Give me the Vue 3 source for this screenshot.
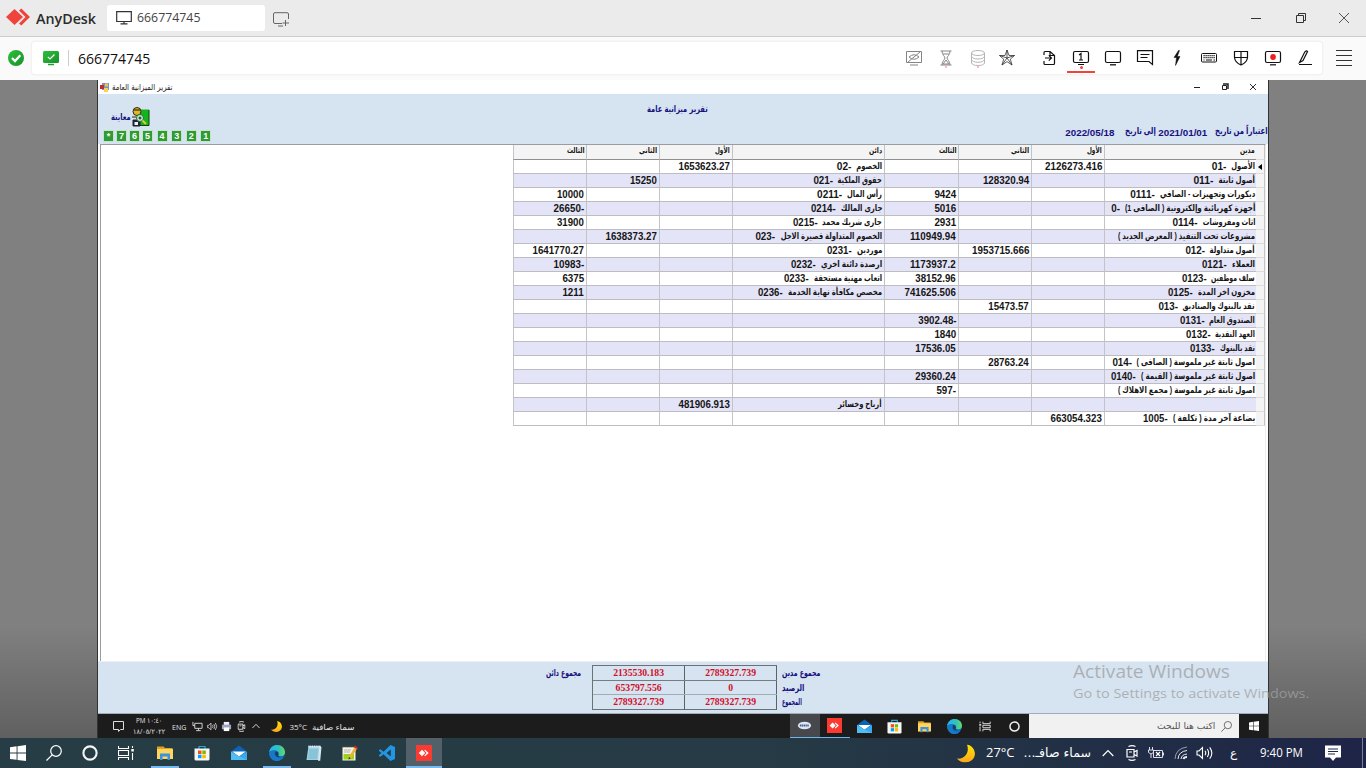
<script setup>
// Squeezes or stretches a line of text to a set width, in the layout too.
const vFit = {
  mounted(el, { value }) {
    const natural = el.offsetWidth
    if (!natural || !value) return
    const style = getComputedStyle(el)
    const rtl = style.direction === 'rtl'
    const own = parseFloat(rtl ? style.marginLeft : style.marginRight) || 0
    el.style.transformOrigin = rtl ? 'right center' : 'left center'
    el.style.transform = `scaleX(${value / natural})`
    el.style[rtl ? 'marginLeft' : 'marginRight'] = `${own + value - natural}px`
    if (rtl && own) el.style.marginLeft = `${own + value - natural}px`
  }
}

const numWidth = (s) => [...s].reduce((w, c) => w + (c === '.' ? 2.9 : c === '-' ? 3.4 : 5.4), 0)

const headers = ['مدين', 'الأول', 'الثاني', 'الثالث', 'دائن', 'الأول', 'الثاني', 'الثالث']
const headWidths = [15, 15, 18, 18, 13, 15, 18, 18]

// debit name, width, first, second, third, credit name, width, first, second, third
const source = [
  ['الأصول  -01', 43, '2126273.416', '', '', 'الخصوم  -02', 45, '1653623.27', '', ''],
  ['أصول ثابتة  -011', 61, '', '128320.94', '', 'حقوق الملكية  -021', 69, '', '15250', ''],
  ['ديكورات وتجهيزات  -  الصافي  -0111', 125, '', '', '9424', 'رأس المال  -0211', 65, '', '', '10000'],
  ['أجهزة كهربائية وإلكترونية ( الصافى 1)  -0', 144, '', '', '5016', 'جارى المالك  -0214', 71, '', '', '-26650'],
  ['اثاث ومفروشات  -0114', 83, '', '', '2931', 'جارى شريك محمد  -0215', 90, '', '', '31900'],
  ['مشروعات تحت التنفيذ ( المعرض الجديد )', 137, '', '', '110949.94', 'الخصوم المتداولة قصيرة الاجل  -023', 126, '', '1638373.27', ''],
  ['أصول متداولة  -012', 70, '', '1953715.666', '', 'موردين  -0231', 56, '', '', '1641770.27'],
  ['العملاء  -0121', 53, '', '', '1173937.2', 'ارصدة دائنة اخري  -0232', 91, '', '', '-10983'],
  ['سلف موظفين  -0123', 74, '', '', '38152.96', 'اتعاب مهنية مستحقة  -0233', 98, '', '', '6375'],
  ['مخزون اخر المدة  -0125', 87, '', '', '741625.506', 'مخصص مكافأة نهاية الخدمة  -0236', 124, '', '', '1211'],
  ['نقد بالبنوك والصناديق  -013', 97, '', '15473.57', '', '', 0, '', '', ''],
  ['الصندوق العام  -0131', 76, '', '', '-3902.48', '', 0, '', '', ''],
  ['العهد النقدية  -0132', 70, '', '', '1840', '', 0, '', '', ''],
  ['نقد بالبنوك  -0133', 65, '', '', '17536.05', '', 0, '', '', ''],
  ['اصول ثابتة غير ملموسة ( الصافى )  -014', 143, '', '28763.24', '', '', 0, '', '', ''],
  ['اصول ثابتة غير ملموسة ( القيمة )  -0140', 144, '', '', '29360.24', '', 0, '', '', ''],
  ['اصول ثابتة غير ملموسة ( مجمع الاهلاك )', 137, '', '', '-597', '', 0, '', '', ''],
  ['', 0, '', '', '', 'أرباح وخسائر', 44, '481906.913', '', ''],
  ['بضاعة آخر مدة ( تكلفة )  -1005', 112, '663054.323', '', '', '', 0, '', '', '']
]

const GAP = 5
// A cell is a list of text pieces; an account's name and its code are separate pieces.
const label = (text, width) => {
  if (!text) return []
  const m = text.match(/^(.*?)\s+(-\d+)$/)
  if (!m) return [{ t: text, w: width, ar: true }]
  const cw = numWidth(m[2])
  return [{ t: m[1], w: width - cw - GAP, ar: true }, { t: m[2], w: cw, code: true }]
}
const num = (t) => (t ? [{ t, w: numWidth(t) }] : [])
const rows = source.map((r) => [label(r[0], r[1]), ...r.slice(2, 5).map(num), label(r[5], r[6]), ...r.slice(7).map(num)])

const totals = [['2135530.183', '2789327.739'], ['653797.556', '0'], ['2789327.739', '2789327.739']]
const badges = ['*', '7', '6', '5', '4', '3', '2', '1']
const remoteApps = ['anydesk', 'mail', 'store', 'folder', 'edge', 'rtask', 'ring']
const hostApps = ['win', 'search', 'ring', 'task', 'folder', 'store', 'mail', 'edge', 'notepad', 'notepp', 'code', 'anydesk']
</script>

<template>
  <div class="screen">
    <svg class="defs" aria-hidden="true">
      <defs>
        <linearGradient id="gMoon" x1="0" y1="0" x2="0" y2="1"><stop offset="0" stop-color="#ffe600" /><stop offset="1" stop-color="#ffa51e" /></linearGradient>
        <linearGradient id="gEdge" x1="0" y1="0" x2="1" y2="0"><stop offset="0" stop-color="#2bb5e8" /><stop offset=".6" stop-color="#2fc2bd" /><stop offset="1" stop-color="#6bdc5a" /></linearGradient>
        <linearGradient id="gGreen" x1="0" y1="0" x2="1" y2="1"><stop offset="0" stop-color="#2fbf3c" /><stop offset="1" stop-color="#16912a" /></linearGradient>
      </defs>
      <symbol id="win" viewBox="0 0 16 16"><path d="M0 2.2 6.6 1.300V7.600H0zM7.500 1.200 16 0V7.600H7.500zM0 8.500H6.600V14.800L0 13.900zM7.500 8.500H16V16L7.500 14.900z" fill="#fff" /></symbol>
      <symbol id="search" viewBox="0 0 16 16"><g fill="none" stroke="currentColor" stroke-width="1.200"><circle cx="10" cy="6" r="5.300" /><path d="M6.200 9.800.5 15.500" /></g></symbol>
      <symbol id="ring" viewBox="0 0 16 16"><circle cx="8" cy="8" r="6.600" fill="none" stroke="#f4f4f4" stroke-width="2.100" /></symbol>
      <symbol id="task" viewBox="0 0 16 16"><path d="M.5 1V3.500H10.500V1M.5 15V12.500H10.500V15M.5 5.500H10.500V10.500H.5zM14.500 1V3M14.500 8V15" fill="none" stroke="#fff" stroke-width="1.100" /><path d="M13.300 4H15.800V6.500H13.300z" fill="#fff" /></symbol>
      <symbol id="rtask" viewBox="0 0 16 16"><path d="M15 2V4.500H6V2M15 14V11.500H6V14M6 6.500H15V9.500H6zM2.500 2V4M2.500 8V14" fill="none" stroke="#ddd" stroke-width="1.200" /><path d="M1.500 5H4V7H1.500z" fill="#ddd" /></symbol>
      <symbol id="folder" viewBox="0 0 16 16"><path d="M0 1.500H6.500L8 3H15.500V14H0z" fill="#e0a21b" /><path d="M0 4H16V14H0z" fill="#ffd560" /><path d="M3 15V8.500H13V15H10.500V11.500H5.500V15z" fill="#3a94dc" /></symbol>
      <symbol id="store" viewBox="0 0 16 16"><path d="M5 4V1.500H11V4" fill="none" stroke="#27a7dd" stroke-width="1.200" /><path d="M.5 3.500H15.500V14q0 1.500-1.500 1.500H2Q.5 15.500.5 14z" fill="#f6f6f6" /><path d="M4 5.500H7.500V9H4z" fill="#f25022" /><path d="M8.300 5.500H11.800V9H8.300z" fill="#7fba00" /><path d="M4 9.700H7.500V13.200H4z" fill="#00a4ef" /><path d="M8.300 9.700H11.800V13.200H8.300z" fill="#ffb900" /></symbol>
      <symbol id="mail" viewBox="0 0 16 16"><path d="M0 6.500 8 .5 16 6.500V15H0z" fill="#0d62b5" /><path d="M1.200 6.500H14.800L8 11.500z" fill="#fff" /><path d="M0 6.500 8 11.500 16 6.500V15H0z" fill="#39a8ed" /><path d="M0 6.500V15H16L6 10.200z" fill="#50bdf5" /></symbol>
      <symbol id="edge" viewBox="0 0 16 16"><circle cx="8" cy="8" r="7.900" fill="#1469bd" /><path d="M.2 7C1 2.500 4.300 0 8.200 0 12.800 0 16 3.300 16 7.300c0 3-2.300 4-4.500 4-1.800 0-2.500-.7-2-1.500C10.500 8 9 5.500 6 5.500 3 5.500.8 7.300.2 7z" fill="url(#gEdge)" /><path d="M.2 7C2 5.300 5 4.900 6.900 5.700 5.200 6.800 5.100 9 6 10.800 7.300 13 10.800 14.300 14.500 12.300 12.800 15 10.500 16 8 16 3 16-.3 11.500.2 7z" fill="#1679ca" /><path d="M7.200 6.500C9 6.500 9.900 8.500 9.300 9.900c-.5 1.200.9 1.700 2.700 1.500C9.800 13 6.800 11.700 6.300 9.500 6 8 6.400 6.500 7.200 6.500z" fill="#1c3e5c" /></symbol>
      <symbol id="notepad" viewBox="0 0 16 16"><path d="M2.500 1H15L13.500 15H.5z" fill="#9ed1e2" /><path d="M13.200 2H15.500L14.200 15.700H12z" fill="#d7e7ec" /><path d="M2.500 1.500H14.500" stroke="#eef" stroke-width="2" stroke-dasharray="1 .8" /><path d="M3 5H12M3 7H12M2.500 9H11.500M2.500 11H11.500M2 13H11" stroke="#62aac3" stroke-width=".7" /></symbol>
      <symbol id="notepp" viewBox="0 0 16 16"><path d="M.5 2H13.500V15.500H.5z" fill="#f5f3e7" /><path d="M.5 1.500H13.500" stroke="#444" stroke-width="2" stroke-dasharray="1.200 .8" /><path d="M2 5H9M2 7H8" stroke="#999" stroke-width=".7" /><path d="M1.500 9H12V14.500H1.500z" fill="#9bd31b" /><path d="M13 1.500 15.500 3 9 13 6.500 14.500 7 11.500z" fill="#eeb23a" /><path d="M13 .8 15.800 2.400 14.800 4 12 2.400z" fill="#d62828" /><path d="M6.500 14.500 7 12 8.700 13.200z" fill="#222" /></symbol>
      <symbol id="code" viewBox="0 0 16 16"><path d="M11.500 0 16 2V14L11.500 16 4.500 9.300 1.500 11.800 0 11V10L2.500 8 0 6V5L1.500 4.200 4.500 6.700zM11.800 4.500 7.500 8 11.800 11.500z" fill="#2296e3" /></symbol>
      <symbol id="anydesk" viewBox="0 0 16 16"><path d="M0 0H16V16H0z" fill="#fb3b31" /><path d="M6 4.800 9.200 8 6 11.200 2.800 8zM9 4.800 12.700 8 9 11.200 8.300 10.500 10.600 8 8.300 5.500z" fill="#fff" /></symbol>
      <symbol id="moon" viewBox="0 0 18 18"><path d="M10 0C15.500 1 18.500 6 17.800 10.500 16.500 18.500 5 20.500 0 14 3 14.500 6 13.500 8 11.500 11 8.500 11.500 4 10 0z" fill="url(#gMoon)" /></symbol>
      <symbol id="up" viewBox="0 0 12 8"><path d="M.7 7 6 1.500 11.300 7" fill="none" stroke="#fff" stroke-width="1.200" /></symbol>
      <symbol id="sound" viewBox="0 0 18 16"><path d="M1 6V10H3L6.500 13.500V2.500L3 6zM9 5.800Q10.500 8 9 10.200M11.300 4Q14 8 11.300 12M13.700 2.300Q18 8 13.700 13.700" fill="none" stroke="#fff" stroke-width="1.100" /></symbol>
      <symbol id="cam" viewBox="0 0 12 16"><path d="M1 4.500H8V12H1zM8 7 11 5.500V11L8 9.500M2.500 1.500Q6-.1 9.500 1.500M2.500 14.500Q6 16.100 9.500 14.500" fill="none" stroke="#fff" stroke-width="1.200" /><path d="M3 6.500H6V7.500H3z" fill="#fff" /></symbol>
    </svg>

    <header class="titlebar">
      <svg class="logo" viewBox="0 0 24 18"><path d="M8.500 1 17 9 8.500 17 0 9z" fill="#ef443b" /><path d="M13 2.500 15.300.5 24 9 15.300 17.500 13 15.500 19.500 9z" fill="#ef443b" /></svg>
      <b class="brand" v-fit="60">AnyDesk</b>
      <div class="tab">
        <svg width="16" height="14" viewBox="0 0 16 14"><path d="M.7.700H15.300V10.500H.7zM8 10.500V12.500M4.500 12.800H11.500" fill="none" stroke="#333" stroke-width="1.200" /></svg>
        <span v-fit="63">666774745</span>
      </div>
      <svg class="newtab" width="17" height="16" viewBox="0 0 17 16"><path d="M9 11.500H2Q.5 11.500.5 10V2Q.5.700 2 .700H14Q15.500.700 15.500 2V7M5 14H10M12.500 8V14M9.500 11H16" fill="none" stroke="#666" /></svg>
      <div class="winbtns">
        <svg width="12" height="12"><path d="M1 6.500H11" stroke="#333" /></svg>
        <svg width="12" height="12"><path d="M1.500 3.500H8.500V10.500H1.500zM3.500 3.500V1.500H10.500V8.500H8.500" fill="none" stroke="#333" /></svg>
        <svg width="12" height="12"><path d="M1 1 11 11M11 1 1 11" stroke="#555" /></svg>
      </div>
    </header>

    <div class="addressbar">
      <svg class="ok" width="16" height="16"><circle cx="8" cy="8" r="8" fill="url(#gGreen)" /><path d="M4 8 7 11 12.300 5.200" fill="none" stroke="#fff" stroke-width="2.300" /></svg>
      <div class="field">
        <svg class="mon" width="16" height="15"><rect width="16" height="12" rx="1.500" fill="url(#gGreen)" /><path d="M4.800 5.800 7 8 11.500 3.500" fill="none" stroke="#fff" stroke-width="1.200" /><path d="M5 13.500H11" stroke="#1e9e31" stroke-width="1.500" /></svg>
        <i class="divider"></i>
        <span class="addr" v-fit="72">666774745</span>
        <div class="tools">
          <svg class="dim" viewBox="0 0 20 20"><path d="M2.500 3.500H17.500V14.500H2.500zM6 17H14M4 14 16 4M5 9Q10 4.500 15 9Q10 13.500 5 9" /></svg>
          <svg class="dim" viewBox="0 0 20 20"><path d="M4.500 3H15.500M4.500 17H15.500M6 3C6 7 9 8.500 9 10 9 11.500 6 13 6 17M14 3C14 7 11 8.500 11 10 11 11.500 14 13 14 17M7 6H13M10 12 7 16H13z" /><circle cx="10" cy="18.700" r="1.200" class="soft" /></svg>
          <svg class="dim" viewBox="0 0 20 20"><g opacity=".6"><ellipse cx="10" cy="5" rx="6.500" ry="2.500" /><path d="M3.500 5V15Q4.500 17.500 10 17.500T16.500 15V5M3.500 8.300Q4.500 11 10 11T16.500 8.300M3.500 11.500Q4.500 14.300 10 14.300T16.500 11.500" /></g><circle cx="10" cy="18.700" r="1.200" class="soft" /></svg>
          <svg class="star" viewBox="0 0 20 20"><path d="M10 2 12 7.500H17.500L13.300 11.200 15 17 10 13.600 5 17 6.700 11.200 2.500 7.500H8zM10 2V10L5 17M2.500 7.500 10 10 17.500 7.500M10 10 15 17" stroke-width=".8" /></svg>
          <svg class="gap" viewBox="0 0 20 20"><path d="M5 7V4.500Q5 3.500 6 3.500H11L15.500 7.500V15.500Q15.500 16.500 14.500 16.500H6Q5 16.500 5 15.500V13M11 3.500V7.500H15.500M6 10H12.500M9.800 7.300 12.500 10 9.800 12.700" stroke-width="1.200" /></svg>
          <div class="active"><svg viewBox="0 0 20 20"><rect x="2.500" y="3.500" width="15" height="11" rx="1.500" /><path d="M8 7 10 5.500V12M8 12H12M7 16.500H13" /></svg><i></i></div>
          <svg viewBox="0 0 20 20"><rect x="2.500" y="3.500" width="15" height="11" rx="1.500" stroke-width="1.200" /><path d="M7 16.800H13" stroke-width="1.300" /></svg>
          <svg viewBox="0 0 20 20"><path d="M2.500 2.700H17.500V16.500L14 13.500H2.500zM5.500 6.500H14.500M5.500 9.500H12.500" stroke-width="1.200" /></svg>
          <svg viewBox="0 0 20 20"><path d="M11.500 2.500 7 9.500H9.500L8.500 17.500 13 8.500H10.300L12.500 2.500z" fill="#111" stroke-width=".5" /></svg>
          <svg viewBox="0 0 20 20"><rect x="2.500" y="5.500" width="15" height="8.500" rx="1" stroke-width="1" /><path d="M4.500 7.700H16M4.500 9.700H16" stroke-dasharray="1.200 .8" /><path d="M4.500 12H5.500M7 12H13M14.500 12H16" /></svg>
          <svg viewBox="0 0 20 20"><path d="M3.500 3.500H16.500V9.500Q16 14.500 10 17Q4 14.500 3.500 9.500zM10 3.500V17M3.500 9.500H16.500" stroke-width="1.200" /></svg>
          <svg viewBox="0 0 20 20"><rect x="2.500" y="3.500" width="15" height="11" rx="1.500" /><circle cx="10" cy="9" r="2.900" class="rec" /><path d="M7 16.800H13" /></svg>
          <svg viewBox="0 0 20 20"><path d="M4.500 14.500 9.500 4.500Q11 2 12.500 3.500L8 12.500zM4 16.500H17" stroke-width="1.200" /></svg>
        </div>
      </div>
      <svg class="menu" width="16" height="18"><path d="M0 1.500H16M0 6.500H16M0 11.500H16M0 16.500H16" stroke="#333" stroke-width="1.200" /></svg>
    </div>

    <main class="remote">
      <section class="window">
        <div class="apptitle">
          <svg width="9" height="9"><path d="M2 0H9V7H2z" fill="#7195cf" /><path d="M5 .500H8V3.500H5z" fill="#f5c242" /><path d="M0 2H4V6H0z" fill="#c92a20" /><path d="M4 5H8V9H4z" fill="#f7d35b" /></svg>
          <span dir="rtl" v-fit="61">تقرير الميزانية العامة</span>
          <div class="appbtns">
            <svg width="8" height="8"><path d="M1 4.500H7" stroke="#222" /></svg>
            <svg width="8" height="8"><path d="M1.500 2.500H5.500V6.500H1.500z" fill="none" stroke="#222" /><path d="M2 1H7V6" fill="none" stroke="#222" stroke-width="1.500" /></svg>
            <svg width="8" height="8"><path d="M1 1 7 7M7 1 1 7" stroke="#333" /></svg>
          </div>
        </div>

        <div class="report">
          <div class="left">
            <div class="preview">
              <span dir="rtl" v-fit="20">معاينة</span>
              <svg width="18" height="20"><path d="M7 2.500H17V18H7z" fill="#12b51c" /><path d="M17 3V18.500H8" fill="none" stroke="#123e15" /><circle cx="5" cy="4.500" r="4" fill="#dcb62c" stroke="#332a0a" /><path d="M2 3H8" stroke="#4a3a10" stroke-width="1.300" /><path d="M0 10H4M1 13H8V19H1z" fill="#22223a" stroke="#222" /><path d="M2.500 15H6V18H2.500z" fill="#eef" /><circle cx="8" cy="11" r="3.500" fill="#c9f0d0" stroke="#1c6e32" /><path d="M6.500 11H9.500M8 9.500V12.500" stroke="#111" /><path d="M10.500 13.500 14 17" stroke="#e6c933" stroke-width="2" /></svg>
            </div>
            <div class="badges"><b v-for="b in badges" :key="b">{{ b }}</b></div>
          </div>
          <h1 dir="rtl"><span v-fit="61">تقرير ميزانية عامة</span></h1>
          <div class="dates">
            <span v-fit="49">2022/05/18</span>
            <span dir="rtl" class="d2" v-fit="31">إلى تاريخ</span>
            <span class="d3" v-fit="49">2021/01/01</span>
            <span dir="rtl" class="d4" v-fit="53">اعتباراً من تاريخ</span>
          </div>
        </div>

        <div class="gridbox">
          <div class="grid" dir="rtl">
            <div class="row head">
              <i class="sel"></i>
              <div v-for="(h, i) in headers" :key="i" class="cell"><span v-fit="headWidths[i]">{{ h }}</span></div>
            </div>
            <div v-for="(r, n) in rows" :key="n" class="row" :class="{ alt: n % 2 }">
              <i class="sel"><svg v-if="n === 0" width="4" height="6"><path d="M4 0V6L0 3z" /></svg></i>
              <div v-for="(c, i) in r" :key="i" class="cell"><span v-for="(p, k) in c" :key="k" v-fit="p.w" :class="{ ar: p.ar, code: p.code }">{{ p.t }}</span></div>
            </div>
          </div>
        </div>

        <div class="summary">
          <span dir="rtl" class="credit" v-fit="35">مجموع دائن</span>
          <div class="sums">
            <div v-for="(t, i) in totals" :key="i" class="sumrow"><b v-for="(v, j) in t" :key="j">{{ v }}</b></div>
          </div>
          <div class="sumlabels">
            <div><span dir="rtl" v-fit="38">مجموع مدين</span></div>
            <div><span dir="rtl" v-fit="22">الرصيد</span></div>
            <div><span dir="rtl" v-fit="20">المجموع</span></div>
          </div>
        </div>

        <div class="rbar">
          <svg class="note" width="11" height="11"><path d="M.5.500H10.500V8.500H7.500L5.500 10.500V8.500H.5z" fill="none" stroke="#ddd" /></svg>
          <div class="clock"><span v-fit="26">PM ١٠:٤٠</span><span v-fit="32">١٨/٠٥/٢٠٢٢</span></div>
          <span class="eng" v-fit="14">ENG</span>
          <div class="tray">
            <svg viewBox="0 0 12 12"><path d="M3 2.500H11V8H3zM1 1V5H3M7 8V10M4.500 10.500H9.500" fill="none" stroke="#ddd" /></svg>
            <svg viewBox="0 0 18 16"><use href="#sound" /></svg>
            <svg viewBox="0 0 12 12"><path d="M3 1H9V5H3z" fill="#eef" /><path d="M1 4H11V9H1z" fill="#9ba5bd" /><path d="M3 7H9V11H3z" fill="#fff" /></svg>
            <svg viewBox="0 0 12 16"><use href="#cam" /></svg>
            <svg class="chev" viewBox="0 0 12 8"><use href="#up" /></svg>
          </div>
          <svg class="rmoon" width="11" height="11" viewBox="0 0 18 18"><use href="#moon" /></svg>
          <span class="deg" v-fit="18">35°C</span>
          <span class="sky" dir="rtl" v-fit="42">سماء صافية</span>
          <div class="rapps">
            <div class="rapp hot on"><svg viewBox="0 0 16 16"><ellipse cx="8" cy="8" rx="7" ry="4" fill="#dfe6f3" /><path d="M3 8H13" stroke="#475b8c" stroke-width="2" stroke-dasharray="1.500 .5" /></svg></div>
            <div v-for="a in remoteApps" :key="a" class="rapp" :class="[a, { on: a === 'anydesk' }]"><svg viewBox="0 0 16 16"><use :href="'#' + a" /></svg></div>
          </div>
          <div class="rsearch">
            <span dir="rtl" v-fit="58">اكتب هنا للبحث</span>
            <svg width="11" height="11" viewBox="0 0 16 16"><use href="#search" /></svg>
          </div>
          <div class="rstart"><svg width="10" height="10" viewBox="0 0 16 16"><use href="#win" /></svg></div>
        </div>
      </section>
      <div class="watermark">
        <div class="w1"><span v-fit="157">Activate Windows</span></div>
        <div class="w2"><span v-fit="236">Go to Settings to activate Windows.</span></div>
      </div>
    </main>

    <footer class="taskbar">
      <div class="apps"><div v-for="a in hostApps" :key="a" class="app" :class="'h-' + a"><svg width="16" height="16" viewBox="0 0 16 16"><use :href="'#' + a" /></svg></div></div>
      <svg class="hmoon" width="18" height="19" viewBox="0 0 18 18"><use href="#moon" /></svg>
      <span class="temp" v-fit="29">27°C</span>
      <span class="hsky" dir="rtl" v-fit="67">سماء صافـ...</span>
      <div class="htray">
        <svg width="12" height="8"><use href="#up" /></svg>
        <svg width="12" height="16"><use href="#cam" /></svg>
        <svg width="17" height="14"><path d="M5.500 4.500H14.500V11.500H5.500zM15.500 6.500V9.500M1.500 1V4M4.500 1V4M.5 4H5.500V6.500L3 8 .5 6.500zM3 8V12" fill="none" stroke="#dde" /><path d="M8 6 12 10M12 6 8 10" stroke="#fff" stroke-width="1.200" /></svg>
        <svg width="14" height="14"><g fill="none" stroke="#e8eaf0"><path d="M1 13Q1.500 2.500 13 1" opacity=".6" /><path d="M4 13Q4.500 5.500 13 4.500M7 13Q7.500 8.500 13 8" /><path d="M9.500 13Q10 11 13 11" stroke-width="2" /></g></svg>
        <svg width="18" height="16"><use href="#sound" /></svg>
      </div>
      <span class="lang">ع</span>
      <span class="time" v-fit="43">9:40 PM</span>
      <svg class="hnote" width="16" height="16"><path d="M0 .500H16V12.500H11L8 16 5 12.500H0z" fill="#fff" /><path d="M3 4H13M3 6.500H13M3 9H10" stroke="#1f2946" /></svg>
      <i class="peek"></i>
    </footer>
  </div>
</template>

<style>
html, body { margin: 0; overflow: hidden; }
</style>

<style scoped>
* { box-sizing: border-box; }
.screen { width: 1366px; height: 768px; display: flex; flex-direction: column; overflow: hidden; font-family: "Open Sans", "DejaVu Sans", sans-serif; }
.defs { position: absolute; width: 0; height: 0; }
span, b { white-space: nowrap; display: inline-block; flex: none; }
svg { flex: none; display: block; }

.titlebar { height: 37px; flex: none; background: #ebebeb; border-bottom: 1px solid #cdcdcd; display: flex; align-items: center; padding-left: 6px; }
.logo { width: 24px; height: 18px; margin-bottom: 2px; }
.brand { margin: 0 0 1px 6px; font-size: 15px; font-weight: 600; color: #2b2b2b; line-height: 20px; }
.tab { margin: 0 0 1px 11px; width: 158px; height: 26px; background: #fff; border-radius: 3px; display: flex; align-items: center; padding-left: 9px; font-size: 13.500px; color: #444; line-height: 20px; }
.tab span { margin: 0 0 2px 5px; }
.newtab { margin: 3px 0 0 8px; }
.winbtns { margin-left: auto; display: flex; width: 116px; gap: 33px; }
.winbtns svg:nth-child(3) { margin-left: -2px; }

.addressbar { height: 43px; flex: none; background: #fafafa; display: flex; align-items: center; padding: 0 14px 1px 8px; }
.field { margin-left: 8px; width: 1290px; height: 32px; background: #fff; box-shadow: 0 0 0 1.500px #f2f2f2; border-radius: 3px; display: flex; align-items: center; padding-left: 11px; }
.divider { width: 1px; height: 16px; background: #ccc; margin-left: 9px; }
.addr { margin: 0 0 1px 9px; font-size: 15px; line-height: 20px; color: #111; }
.tools { margin-left: auto; margin-right: 1px; display: flex; align-items: center; height: 32px; }
.tools svg { width: 20px; height: 20px; margin: 0 6px; fill: none; stroke: #111; stroke-width: 1.200; }
.tools svg.dim { stroke: #858585; stroke-width: 1; }
.tools svg.star { margin-left: 3px; stroke: #333; }
.tools svg.gap { margin-left: 16px; }
.tools svg .rec { fill: #ef2020; stroke: none; }
.tools svg .soft { fill: #f4bdb9; stroke: none; }
.active { position: relative; }
.active i { position: absolute; left: 2px; top: 23px; width: 28px; height: 2px; background: #ef443b; }
.active i::before { content: ""; position: absolute; left: 12.500px; top: -5px; width: 3px; height: 3px; border-radius: 50%; background: #ef443b; }
.menu { margin-left: 14px; }

.remote { height: 658px; flex: none; position: relative; background: linear-gradient(#808080 0, #808080 83%, #606060 100%); padding-left: 97px; }
.window { width: 1172px; height: 658px; border-left: 1px solid #333; border-right: 1px solid #333; display: flex; flex-direction: column; background: #fff; overflow: hidden; }
.apptitle { height: 14px; flex: none; display: flex; align-items: center; padding-left: 2px; font: 8.500px/14px "DejaVu Sans", sans-serif; color: #222; }
.apptitle span { margin-left: 3px; }
.appbtns { margin-left: auto; display: flex; gap: 20px; margin-right: 11px; margin-bottom: 1px; }
.report { height: 50px; flex: none; background: #d6e3f0; display: flex; color: #16107f; font: bold 9px/12px "DejaVu Sans", sans-serif; }
.left { width: 549px; }
.preview { display: flex; align-items: center; padding: 13px 0 0 13px; height: 33px; }
.preview svg { margin-left: 1px; }
.badges { display: flex; margin: 4px 0 0 6px; }
.badges b { width: 9px; height: 10px; margin-right: 4px; background: #2f9b33; color: #fff; font: bold 9px/10px "Liberation Sans", sans-serif; text-align: center; box-shadow: 0 0 0 1px #c4e3c8; }
.badges b:nth-child(n+4) { margin-right: 5.600px; }
h1 { margin: 9px 0 0; font-size: 9px; line-height: 12px; width: 61px; height: 12px; }
.dates { margin-left: auto; display: flex; align-self: flex-end; margin-bottom: 5px; height: 13px; font: bold 9.800px/13px "Liberation Sans", "DejaVu Sans", sans-serif; }
.dates span[dir] { font-size: 9px; line-height: 11px; }
.d2 { margin-left: 11px; }
.d3 { margin-left: 2px; }
.d4 { margin-left: 8px; }

.gridbox { height: 517px; flex: none; margin: 0 2px 0 2px; border: solid #999ca0; border-width: 1px 1px 0 1px; border-right-color: #eee; }
.grid { width: 752px; margin-left: auto; margin-right: 0; }
.row { display: grid; grid-template-columns: 9px 152px 73px 73px 74px 152px 73px 73px 73px; height: 14px; width: 752px; font: bold 10px/13px "Liberation Sans", "DejaVu Sans", sans-serif; color: #151515; }
.cell { border-left: 1px solid #c3c3c8; border-bottom: 1px solid #bdbdc1; padding-right: 1px; display: flex; height: 14px; min-width: 0; }
.row .cell:not(:nth-child(2)) { padding-right: 2px; }
.row.alt .cell { background: #e4e4f8; }
.ar { font-size: 9px; line-height: 12px; }
.code { margin-right: 5px; }
.head { height: 15px; font: bold 8px/12px "DejaVu Sans", sans-serif; }
.head .cell { height: 15px; background: #f4f4f4; border-bottom-color: #8f8f8f; }
.sel { background: #f4f4f4; display: flex; align-items: center; justify-content: center; border-bottom: 1px solid #ddd; border-right: 1px solid #c3c3c8; }

.summary { height: 52px; flex: none; background: #d6e3f0; border-top: 1px solid #e9eff5; display: flex; color: #16107f; font: bold 9.500px/13px "DejaVu Sans", sans-serif; }
.credit { margin: 4px 0 0 448px; height: 12px; }
.sums { margin: 3px 0 0 11px; width: 185px; height: 45px; border: 1px solid #6c7178; border-right: 0; }
.sumrow { display: flex; height: 14.500px; border-bottom: 1px solid #777b82; }
.sumrow:last-child { border-bottom: 0; }
.sumrow:nth-child(2) { border-bottom-color: #a5abb2; }
.sumrow b { width: 92px; border-right: 1px solid #5d6269; text-align: center; color: #d0102a; font: bold 9.700px/13px "Liberation Serif", serif; }
.sumlabels { margin: 4px 0 0 5px; }
.sumlabels div { height: 14.700px; display: flex; }

.rbar { height: 25px; flex: none; background: #1c1c1c; border-top: 1px solid #a0acb8; display: flex; align-items: center; color: #e4e4e4; font-size: 8px; line-height: 11px; padding-left: 15px; }
.clock { margin-left: 8px; width: 34px; display: flex; flex-direction: column; align-items: center; font-size: 7px; line-height: 11px; }
.eng { margin-left: 6px; }
.tray { display: flex; margin-left: 4px; align-items: center; }
.tray svg { width: 11px; height: 11px; margin: 0 1.800px; }
.tray .chev { width: 8px; height: 6px; margin-left: 3px; }
.rmoon { margin-left: 10px; }
.deg { margin-left: 7px; }
.sky { margin-left: 5px; }
.rapps { margin-left: auto; display: flex; }
.rapp { width: 29.900px; height: 24px; display: flex; align-items: center; justify-content: center; }
.rapp svg { width: 15px; height: 15px; }
.rapp.ring svg { width: 11px; height: 11px; }
.rapp.rtask svg, .rapp.folder svg { width: 13px; height: 13px; }
.rapp.hot { background: #46484c; }
.rapp.on { border-bottom: 1px solid #6fb4ee; }
.rsearch { width: 210px; height: 24px; background: #f1f1f1; color: #555; display: flex; align-items: center; justify-content: flex-end; gap: 6px; padding-right: 7px; font: 9px/12px "DejaVu Sans", sans-serif; }
.rstart { width: 29px; display: flex; justify-content: center; }

.watermark { position: absolute; left: 1073px; top: 578px; color: rgba(158, 161, 165, .78); }
.w1 { font-size: 18.500px; line-height: 25px; display: flex; }
.w2 { font-size: 13.500px; line-height: 20px; display: flex; }

.taskbar { height: 30px; flex: none; display: flex; align-items: center; color: #fff; background: linear-gradient(90deg, #263d45 0, #263b45 55%, #202b46 88%, #1e2447 100%); }
.apps { display: flex; width: 442px; height: 30px; }
.app { width: 36px; height: 30px; display: flex; align-items: center; justify-content: center; flex: none; }
.h-folder { width: 28px; margin: 0 5px 0 7px; border-bottom: 2px solid #78b9ee; padding-top: 2px; }
.h-edge { width: 28px; margin: 0 5px; border-bottom: 2px solid #78b9ee; padding-top: 2px; }
.h-store { width: 36px; }
.h-mail { width: 38px; }
.h-code { width: 38px; }
.h-anydesk { background: #526069; border-bottom: 2px solid #78b9ee; padding-top: 2px; margin-left: auto; }
.hmoon { margin-left: 515px; }
.temp { margin-left: 11px; font-size: 12.500px; line-height: 16px; }
.hsky { margin-left: 9px; font: 12.500px/16px "DejaVu Sans", sans-serif; }
.htray { display: flex; align-items: center; margin-left: 11px; gap: 12px; width: 112px; }
.htray svg:nth-child(3) { margin-left: -2px; }
.htray svg:nth-child(4) { margin-left: -3px; }
.htray svg:nth-child(5) { margin-left: -4px; }
.lang { margin-left: 16px; width: 10px; font: 12px/16px "DejaVu Sans", sans-serif; }
.time { margin-left: 20px; font-size: 12px; line-height: 16px; }
.hnote { margin-left: 22px; }
.peek { margin-left: auto; margin-right: 3px; width: 1px; height: 30px; background: #7b8194; }
</style>
